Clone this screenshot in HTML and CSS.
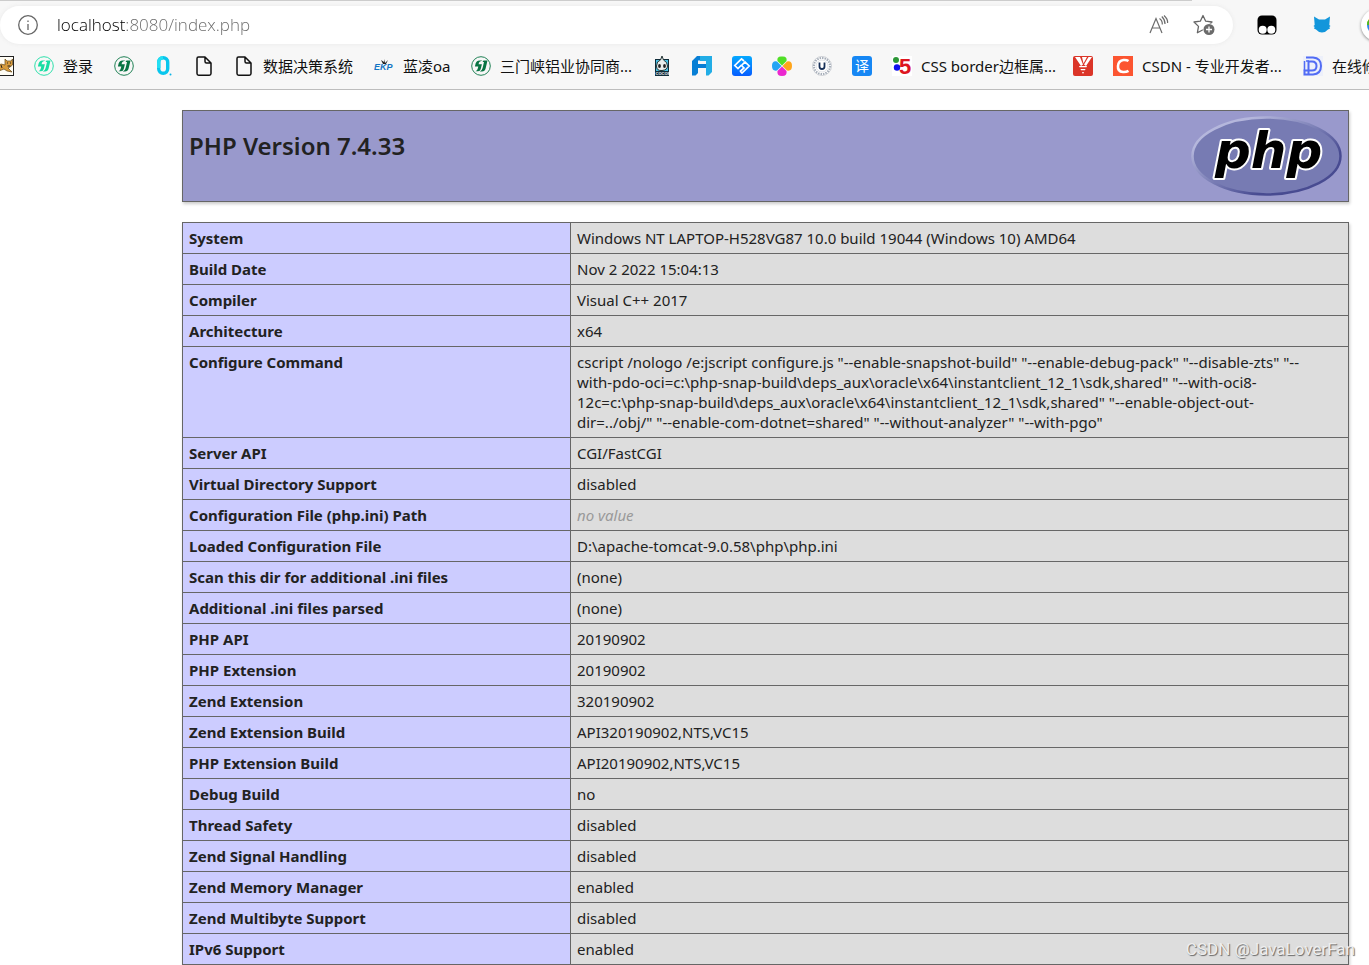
FILE: index.html
```html
<!DOCTYPE html>
<html lang="zh">
<head>
<meta charset="utf-8">
<title>PHP 7.4.33 - phpinfo()</title>
<link rel="stylesheet" href="styles.css">
</head>
<body>
<svg class="defs" aria-hidden="true">
  <symbol id="swirl" viewBox="0 0 20 20">
    <circle cx="10" cy="10" r="9.300" fill="none" stroke="currentColor" stroke-width="0.900"/>
    <path d="M11.500 4.400H8.500Q5.500 4.400 4.700 7.300L3.900 10.500H7.300L6.800 12.500Q6.300 14.500 4.500 15.300H7Q9.200 15.300 9.800 12.800L10.900 8.200H7.600L8 6.600Q8.400 5.200 11.500 4.400Z" fill="currentColor"/>
    <path d="M16.500 4.400H12.500Q11.800 5 11.600 6H13L11.600 12Q11 14.600 8.800 15.600H11Q13.900 15.600 14.600 12.600Z" fill="currentColor"/>
  </symbol>
  <symbol id="page" viewBox="0 0 20 20">
    <path d="M4.500 1H11L17 7V17.500Q17 19.200 15.300 19.200H4.700Q3 19.200 3 17.500V2.500Q3 1 4.500 1ZM11 1V5.500Q11 7 12.500 7H17" fill="none" stroke="#111" stroke-width="1.500" stroke-linejoin="round"/>
  </symbol>
</svg>

<div class="browser">
  <div class="tab-edge"></div>
  <div class="toolbar">
    <form class="address">
      <button class="icon-button" type="button" aria-label="Site information">
        <svg class="icon" viewBox="0 0 20 20" fill="none" stroke="#666" stroke-width="1.300"><circle cx="10" cy="10" r="9.300"/><path d="M10 9v6M10 5.500v1.600"/></svg>
      </button>
      <input class="url" type="text" aria-label="Address" value="localhost:8080/index.php">
      <button class="icon-button" type="button" aria-label="Read aloud">
        <svg class="icon" viewBox="0 0 20 20" fill="none" stroke="#6b6b6b" stroke-width="1.200"><path d="M1 18L7 3.500L13 18M3.200 13H10.800M10.500 3.500Q13.500 5.500 13.300 9.500M12.800 1.500Q16 4.500 16 9M15 .5Q19 4 18.600 8"/></svg>
      </button>
      <button class="icon-button star" type="button" aria-label="Add to favorites">
        <svg class="icon wide" viewBox="0 0 22 22"><path d="M10 1.500L12.700 7.200L19 8L14.500 12.400L15.600 18.700L10 15.700L4.400 18.700L5.500 12.400L1 8L7.300 7.200Z" fill="#fff" stroke="#666" stroke-width="1.300" stroke-linejoin="round"/><circle cx="16" cy="15.500" r="6.300" fill="#fff"/><circle cx="16" cy="15.500" r="5.500" fill="#6b6b6b"/><path d="M16 12.500v6M13 15.500h6" stroke="#fff" stroke-width="1.300"/></svg>
      </button>
    </form>
    <div class="extensions">
      <button class="icon-button" type="button" aria-label="Script manager">
        <svg class="icon" viewBox="0 0 20 20"><rect x=".5" y=".5" width="19" height="19" rx="4.500"/><circle cx="5.700" cy="14.700" r="4" fill="#fff"/><circle cx="14.300" cy="14.700" r="4" fill="#fff"/></svg>
      </button>
      <button class="icon-button" type="button" aria-label="Cat extension">
        <svg class="icon" viewBox="0 0 20 20"><path d="M2 1.500L7 4.500H13L18 1.500L17.300 10L18.500 11L17.300 12L18 13.500L16 14.500Q13.500 17.500 10 17.500T4 14.500L2 13.500L2.700 12L1.500 11L2.700 10Z" fill="#1296db"/></svg>
      </button>
      <button class="icon-button round" type="button" aria-label="Color extension">
        <svg class="icon" viewBox="0 0 20 20"><path d="M0 10A10 10 0 0 1 10 0V10Z" fill="#f7c600"/><path d="M0 10Q0 5 3 4L10 10Z" fill="#48b829"/><path d="M0 10A10 10 0 0 0 10 20V10Z" fill="#2f83ed"/></svg>
      </button>
    </div>
  </div>

  <nav class="bookmarks" aria-label="Bookmarks">
    <a href="#" aria-label="Tomcat"><svg class="icon" viewBox="0 0 20 20"><rect x=".5" y=".5" width="19" height="19" fill="#fffdf5" stroke="#222"/><path d="M1 12L7 8L11 9L11 3L13 5H17L18.500 3V9L16 11L14 12L18 16L13 15L10 13L5 15L1 18Z" fill="#d79b3c" stroke="#654719" stroke-width=".7"/><path d="M13 7h1M16 7h1M13.500 10h3M4 11l2 3M7 9l1 3" stroke="#222"/></svg></a>
    <a href="#"><svg class="icon mint"><use href="#swirl"/></svg><span>登录</span></a>
    <a href="#" aria-label="协同"><svg class="icon green"><use href="#swirl"/></svg></a>
    <a href="#" aria-label="O"><svg class="icon" viewBox="0 0 20 20"><rect x="4.700" y="1.700" width="9" height="15.600" rx="4.500" fill="none" stroke="#08c6ed" stroke-width="3.400"/><path d="M4.700 12V7Q4.700 1.700 9 1.700" fill="none" stroke="#24dff2" stroke-width="3.400"/><circle cx="16.500" cy="18.500" r="1" fill="#08b5e8"/></svg></a>
    <a href="#" aria-label="Page"><svg class="icon"><use href="#page"/></svg></a>
    <a href="#"><svg class="icon"><use href="#page"/></svg><span class="six">数据决策系统</span></a>
    <a href="#"><svg class="icon" viewBox="0 0 20 20"><text x="0" y="14" class="ekp">EKP</text><path d="M9 8L7 4L10 6L10 3L11 7L14 4L12 8Z" fill="#222"/></svg><span class="oa">蓝凌oa</span></a>
    <a href="#"><svg class="icon green"><use href="#swirl"/></svg><span class="long">三门峡铝业协同商...</span></a>
    <a href="#" aria-label="Cocos"><svg class="icon" viewBox="0 0 20 20"><rect x="3" y="3" width="14" height="17" fill="#102c39"/><path d="M4 4H16V15H4Z" fill="#45bfe4"/><path d="M10 0L8.500 4Q4.500 5 4.500 10T10 14.500T15.500 10T11.500 4Z" fill="#e9eeee" stroke="#233" stroke-width="1"/><ellipse cx="7.500" cy="10" rx="1.400" ry="1.900" fill="#222"/><ellipse cx="12.500" cy="10" rx="1.400" ry="1.900" fill="#222"/><text x="3.500" y="19" class="cocos">COCOS</text></svg></a>
    <a href="#" aria-label="F"><svg class="icon" viewBox="0 0 20 20"><path d="M0 5L5 0H10V4.500H6V8H14V12H6V17L3.500 19.500H0Z" fill="#087fd5"/><path d="M8 0H20V16L16.500 19.500H14V5H8Z" fill="#22ade6"/></svg></a>
    <a href="#" aria-label="Code"><svg class="icon" viewBox="0 0 20 20"><linearGradient id="sky" x2="0" y2="1"><stop stop-color="#05a9ff"/><stop offset="1" stop-color="#065dff"/></linearGradient><rect width="20" height="20" rx="3" fill="url(#sky)"/><path d="M12 5L9.500 2.800L2.800 9.500L6 12.500L9.500 9M8 15L10 17L17.200 10L13 6L9.500 9.500L12 12L8 15.500" fill="none" stroke="#fff" stroke-width="1.700"/></svg></a>
    <a href="#" aria-label="Clover"><svg class="icon" viewBox="0 0 20 20"><path d="M10 9.500L5.500 5Q4.500 0 10 .5Q15.500 0 14.500 5Z" fill="#50df27"/><path d="M10.500 10L15 5.500Q20 4.500 20 10T15 14.500Z" fill="#ffa51b"/><path d="M10 10.500L14.500 15Q15.500 20 10 20T5.500 15Z" fill="#eb27cf"/><path d="M9.500 10L5 14.500Q0 15.500 0 10T5 5.500Z" fill="#23a4f4"/></svg></a>
    <a href="#" aria-label="University"><svg class="icon" viewBox="0 0 20 20"><circle cx="10" cy="10" r="9.500" fill="#fff" stroke="#aeb3bc" stroke-width=".6"/><circle cx="10" cy="10" r="8" fill="none" stroke="#a5adb8" stroke-width="2" stroke-dasharray="1.500 1"/><circle cx="10" cy="10" r="6" fill="#fff" stroke="#c2c7ce" stroke-width=".5"/><path d="M7.500 6.500V10.500Q7.500 13 10 13T12.500 10.500V6.500" fill="none" stroke="#173058" stroke-width="1.800"/></svg></a>
    <a href="#" aria-label="翻译"><svg class="icon" viewBox="0 0 20 20"><rect width="20" height="20" rx="3" fill="#1687f4"/><text x="3" y="15" class="translate">译</text></svg></a>
    <a href="#"><svg class="icon" viewBox="0 0 20 20"><rect width="20" height="20" fill="#fff"/><circle cx="4" cy="4" r="3" fill="#2b9636"/><circle cx="5" cy="11.500" r="3.200" fill="#1010ee"/><text x="7" y="18" class="five">5</text></svg><span class="long">CSS border边框属...</span></a>
    <a href="#" aria-label="V"><svg class="icon" viewBox="0 0 20 20"><rect width="20" height="20" rx="2" fill="#db3528"/><path d="M2 1H7L10 8.500L8 10ZM9 1H14L10.500 7.500ZM15.500 1H19L13 10L11 8.500ZM6 10H14L13.500 11.300H6.500ZM7.500 13H12.500L12 14.300H8ZM9 16H11L10 18Z" fill="#fff"/></svg></a>
    <a href="#"><svg class="icon" viewBox="0 0 20 20"><rect width="20" height="20" fill="#fc5531"/><path d="M15.500 5Q13.500 3.700 10.500 4Q5.500 4.500 5 10T10 16Q13 16.300 15.500 14.800" fill="none" stroke="#fff" stroke-width="2.600"/></svg><span class="longer">CSDN - 专业开发者...</span></a>
    <a href="#"><svg class="icon" viewBox="0 0 20 20"><rect width="20" height="20" fill="#edf0fa"/><path d="M3 1.500H10Q18 2 18 10T10 18.500H1.500V14.500H9Q13.500 14.500 13.500 10T9 5.500H5.500V18" fill="none" stroke="#526cf4" stroke-width="2"/><path d="M1.500 5V14.500M3 5H6" stroke="#526cf4" stroke-width="1.500"/></svg><span>在线修改</span></a>
  </nav>
</div>

<main class="info">
  <header class="banner">
    <h1>PHP Version 7.4.33</h1>
    <svg class="logo" viewBox="0 0 151 81" role="img" aria-label="PHP logo">
      <linearGradient id="rim" x2="1" y2="1"><stop offset=".2" stop-color="#b5b7dc"/><stop offset=".5" stop-color="#777bb3"/><stop offset=".72" stop-color="#484b91"/></linearGradient>
      <ellipse cx="75.500" cy="40.500" rx="74" ry="38.500" fill="#777bb3" stroke="url(#rim)" stroke-width="2.500"/>
      <text x="24" y="52" class="wordmark">php</text>
    </svg>
  </header>

  <table>
    <tbody>
      <tr><th scope="row">System</th><td>Windows NT LAPTOP-H528VG87 10.0 build 19044 (Windows 10) AMD64</td></tr>
      <tr><th scope="row">Build Date</th><td>Nov 2 2022 15:04:13</td></tr>
      <tr><th scope="row">Compiler</th><td>Visual C++ 2017</td></tr>
      <tr><th scope="row">Architecture</th><td>x64</td></tr>
      <tr><th scope="row">Configure Command</th><td>cscript /nologo /e:jscript configure.js "--enable-snapshot-build" "--enable-debug-pack" "--disable-zts" "--<br>with-pdo-oci=c:\php-snap-build\deps_aux\oracle\x64\instantclient_12_1\sdk,shared" "--with-oci8-<br>12c=c:\php-snap-build\deps_aux\oracle\x64\instantclient_12_1\sdk,shared" "--enable-object-out-<br>dir=../obj/" "--enable-com-dotnet=shared" "--without-analyzer" "--with-pgo"</td></tr>
      <tr><th scope="row">Server API</th><td>CGI/FastCGI</td></tr>
      <tr><th scope="row">Virtual Directory Support</th><td>disabled</td></tr>
      <tr><th scope="row">Configuration File (php.ini) Path</th><td><i>no value</i></td></tr>
      <tr><th scope="row">Loaded Configuration File</th><td>D:\apache-tomcat-9.0.58\php\php.ini</td></tr>
      <tr><th scope="row">Scan this dir for additional .ini files</th><td>(none)</td></tr>
      <tr><th scope="row">Additional .ini files parsed</th><td>(none)</td></tr>
      <tr><th scope="row">PHP API</th><td>20190902</td></tr>
      <tr><th scope="row">PHP Extension</th><td>20190902</td></tr>
      <tr><th scope="row">Zend Extension</th><td>320190902</td></tr>
      <tr><th scope="row">Zend Extension Build</th><td>API320190902,NTS,VC15</td></tr>
      <tr><th scope="row">PHP Extension Build</th><td>API20190902,NTS,VC15</td></tr>
      <tr><th scope="row">Debug Build</th><td>no</td></tr>
      <tr><th scope="row">Thread Safety</th><td>disabled</td></tr>
      <tr><th scope="row">Zend Signal Handling</th><td>disabled</td></tr>
      <tr><th scope="row">Zend Memory Manager</th><td>enabled</td></tr>
      <tr><th scope="row">Zend Multibyte Support</th><td>disabled</td></tr>
      <tr><th scope="row">IPv6 Support</th><td>enabled</td></tr>
    </tbody>
  </table>
  <div class="watermark">CSDN @JavaLoverFan</div>
</main>
</body>
</html>
```
FILE: styles.css
```css
* {
  box-sizing: border-box;
}

body {
  margin: 0;
  background: #fff;
  color: #222;
  font: 15px/20px "Noto Sans", "Noto Sans CJK SC", sans-serif;
}

.defs {
  display: none;
}

.browser {
  display: flex;
  flex-direction: column;
  height: 90px;
  overflow: hidden;
  background: #f7f7f7;
  border-bottom: 1px solid #bdbdbd;
}

.tab-edge {
  height: 1px;
  margin-right: 177px;
  background: #ccc;
}

.toolbar {
  display: flex;
  margin-top: 5px;
}

.address {
  display: flex;
  flex: 1;
  align-items: center;
  height: 38px;
  padding: 0 18px;
  background: #fff;
  border-radius: 19px;
  box-shadow: 0 0 4px #e8e8e8;
}

.url {
  flex: 1;
  min-width: 0;
  margin-left: 19px;
  padding: 0;
  border: 0;
  outline: 0;
  font: 300 17px/24px "Open Sans", "Noto Sans", sans-serif;
  color: transparent;
  background: linear-gradient(90deg, #000 69px, #666 69px);
  background-clip: text;
  -webkit-background-clip: text;
}

.icon-button {
  display: flex;
  flex: none;
  padding: 0;
  border: 0;
  background: none;
}

.star {
  margin-left: 24px;
}

.icon {
  display: block;
  flex: none;
  width: 20px;
  height: 20px;
}

.wide {
  width: 22px;
  height: 22px;
}

.extensions {
  display: flex;
  align-items: center;
  gap: 35px;
  width: 136px;
  padding-left: 24px;
}

.round {
  margin-left: -6px;
  padding: 6px;
  border-radius: 50%;
  background: #fff;
  box-shadow: 0 1px 3px #888;
}

.bookmarks {
  display: flex;
  align-items: center;
  gap: 20px;
  height: 46px;
  margin-left: -6px;
}

.bookmarks a {
  display: flex;
  flex: none;
  align-items: center;
  gap: 9px;
  color: #111;
  text-decoration: none;
  white-space: nowrap;
}

.bookmarks span {
  min-width: 31px;
}

.bookmarks .six {
  width: 91px;
}

.bookmarks .oa {
  width: 48px;
}

.bookmarks .long {
  width: 132px;
}

.bookmarks .longer {
  width: 141px;
}

.mint {
  color: #18dda3;
}

.green {
  color: #087443;
}

.ekp {
  fill: #1475c4;
  font: italic bold 9px "Liberation Sans", sans-serif;
}

.cocos {
  fill: #fff;
  font: bold 4px "Liberation Sans", sans-serif;
}

.translate {
  fill: #fff;
  font: 14px "Noto Sans CJK SC", sans-serif;
}

.five {
  fill: #dd1620;
  font: bold 22px "Liberation Sans", sans-serif;
}

.info {
  position: relative;
  margin: 20px 20px 0 182px;
}

.banner {
  display: flex;
  justify-content: space-between;
  align-items: flex-start;
  margin-bottom: 20px;
  padding: 4px 6px;
  border: 1px solid #666;
  background: #99c;
  box-shadow: 1px 2px 3px #ccc;
}

.banner h1 {
  margin: 15px 0 0;
  font-size: 24px;
  line-height: 32px;
  font-weight: 600;
}

.logo {
  width: 151px;
  height: 82px;
}

.wordmark {
  fill: #000;
  stroke: #fff;
  stroke-width: 4px;
  stroke-linejoin: round;
  paint-order: stroke;
  font: italic bold 50px "DejaVu Sans", sans-serif;
}

table {
  width: 100%;
  border-collapse: collapse;
  table-layout: fixed;
  box-shadow: 1px 2px 3px #ccc;
}

th,
td {
  padding: 5px 6px;
  border: 1px solid #666;
  text-align: left;
  vertical-align: top;
}

th {
  width: 388px;
  background: #ccf;
  font-weight: 700;
}

td {
  background: #ddd;
}

td i {
  color: #999;
}

.watermark {
  position: absolute;
  right: -6px;
  bottom: 4px;
  color: #eee;
  font: 17px/24px Roboto, sans-serif;
  text-shadow: 1px 1px 1px #666;
}
```
